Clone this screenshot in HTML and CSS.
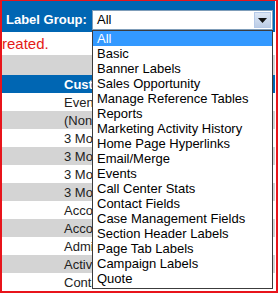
FILE: index.html
```html
<!DOCTYPE html>
<html lang="en">
<head>
  <meta charset="UTF-8">
  <meta name="viewport" content="width=device-width, initial-scale=1.0">
  <title>Labels</title>
  <link rel="stylesheet" href="styles.css">
</head>
<body>
  <div class="frame">
    <div class="topbar">
      <span class="group-label">Label Group:</span>
      <div class="select">
        <span class="select-value">All</span>
        <span class="select-btn">
          <svg width="9" height="5" viewBox="0 0 9 5"><path d="M0 0h9L4.5 5z" fill="#111"/></svg>
        </span>
      </div>
    </div>

    <p class="notice">reated.</p>

    <div class="toolbar"></div>

    <table class="grid">
      <colgroup>
        <col class="col-edit">
        <col class="col-name">
        <col class="col-value">
      </colgroup>
      <thead>
        <tr><th></th><th>Custom Label</th><th>Default</th></tr>
      </thead>
      <tbody>
        <tr><td></td><td>Event Type</td><td>Event</td></tr>
        <tr class="alt"><td></td><td>(None)</td><td>None</td></tr>
        <tr><td></td><td>3 Months</td><td>3 Mo</td></tr>
        <tr class="alt"><td></td><td>3 Months Ago</td><td>3 Mo</td></tr>
        <tr><td></td><td>3 Months Ahead</td><td>3 Mo</td></tr>
        <tr class="alt"><td></td><td>3 Months Old</td><td>3 Mo</td></tr>
        <tr><td></td><td>Account</td><td>Acc</td></tr>
        <tr class="alt"><td></td><td>Account Type</td><td>Acc</td></tr>
        <tr><td></td><td>Admin</td><td>Adm</td></tr>
        <tr class="alt"><td></td><td>Activity</td><td>Act</td></tr>
        <tr><td></td><td>Contact</td><td>Con</td></tr>
      </tbody>
    </table>

    <ul class="listbox">
      <li class="selected">All</li>
      <li>Basic</li>
      <li>Banner Labels</li>
      <li>Sales Opportunity</li>
      <li>Manage Reference Tables</li>
      <li>Reports</li>
      <li>Marketing Activity History</li>
      <li>Home Page Hyperlinks</li>
      <li>Email/Merge</li>
      <li>Events</li>
      <li>Call Center Stats</li>
      <li>Contact Fields</li>
      <li>Case Management Fields</li>
      <li>Section Header Labels</li>
      <li>Page Tab Labels</li>
      <li>Campaign Labels</li>
      <li>Quote</li>
    </ul>
  </div>
</body>
</html>
```

FILE: styles.css
```css
* {
  margin: 0;
  padding: 0;
  box-sizing: border-box;
}

body {
  font-family: "Liberation Sans", Arial, sans-serif;
  font-size: 13px;
  background-color: #fff;
}

.frame {
  position: relative;
  width: 278px;
  height: 293px;
  border: 2px solid #e8141b;
  border-top-width: 1px;
  padding-right: 1px;
  overflow: hidden;
  background-color: #fff;
}

/* blue bar with the group picker */
.topbar {
  display: flex;
  align-items: flex-start;
  height: 31px;
  padding: 9px 0 0 4px;
  background-color: #0066b3;
}

.group-label {
  width: 86px;
  color: #fff;
  font-weight: bold;
  line-height: 20px;
}

.select {
  display: flex;
  width: 181px;
  height: 20px;
  border: 1px solid #7f9db9;
  background-color: #fff;
}

.select-value {
  flex: 1;
  padding-left: 4px;
  line-height: 18px;
  color: #000;
}

.select-btn {
  display: flex;
  justify-content: center;
  align-items: center;
  width: 17px;
  margin: 1px;
  border: 1px solid #b5c9e8;
  background: linear-gradient(#dce6f5, #bccde6);
}

.notice {
  height: 23px;
  padding-top: 3px;
  color: #e41b17;
  font-size: 15px;
  line-height: 18px;
}

.toolbar {
  height: 20px;
  background-color: #d4d4d4;
}

/* labels grid */
.grid {
  width: 100%;
  border-collapse: collapse;
  table-layout: fixed;
}

.col-edit {
  width: 58px;
}

.col-name {
  width: 212px;
}

.grid th {
  height: 18px;
  padding-left: 4px;
  background-color: #0066b3;
  color: #fff;
  font-weight: bold;
  text-align: left;
  white-space: nowrap;
  overflow: hidden;
}

.grid td {
  height: 18px;
  padding-left: 4px;
  color: #222;
  white-space: nowrap;
  overflow: hidden;
}

.grid tr.alt td {
  background-color: #d4d4d4;
}

/* open dropdown list over the page */
.listbox {
  position: absolute;
  top: 29px;
  left: 90px;
  width: 181px;
  list-style: none;
  border: 1px solid #3c3c3c;
  background-color: #fff;
  padding-bottom: 2px;
}

.listbox li {
  height: 15px;
  padding-left: 4px;
  line-height: 15px;
  color: #000;
  white-space: nowrap;
}

.listbox li.selected {
  background-color: #3399ff;
  color: #fff;
}
```
